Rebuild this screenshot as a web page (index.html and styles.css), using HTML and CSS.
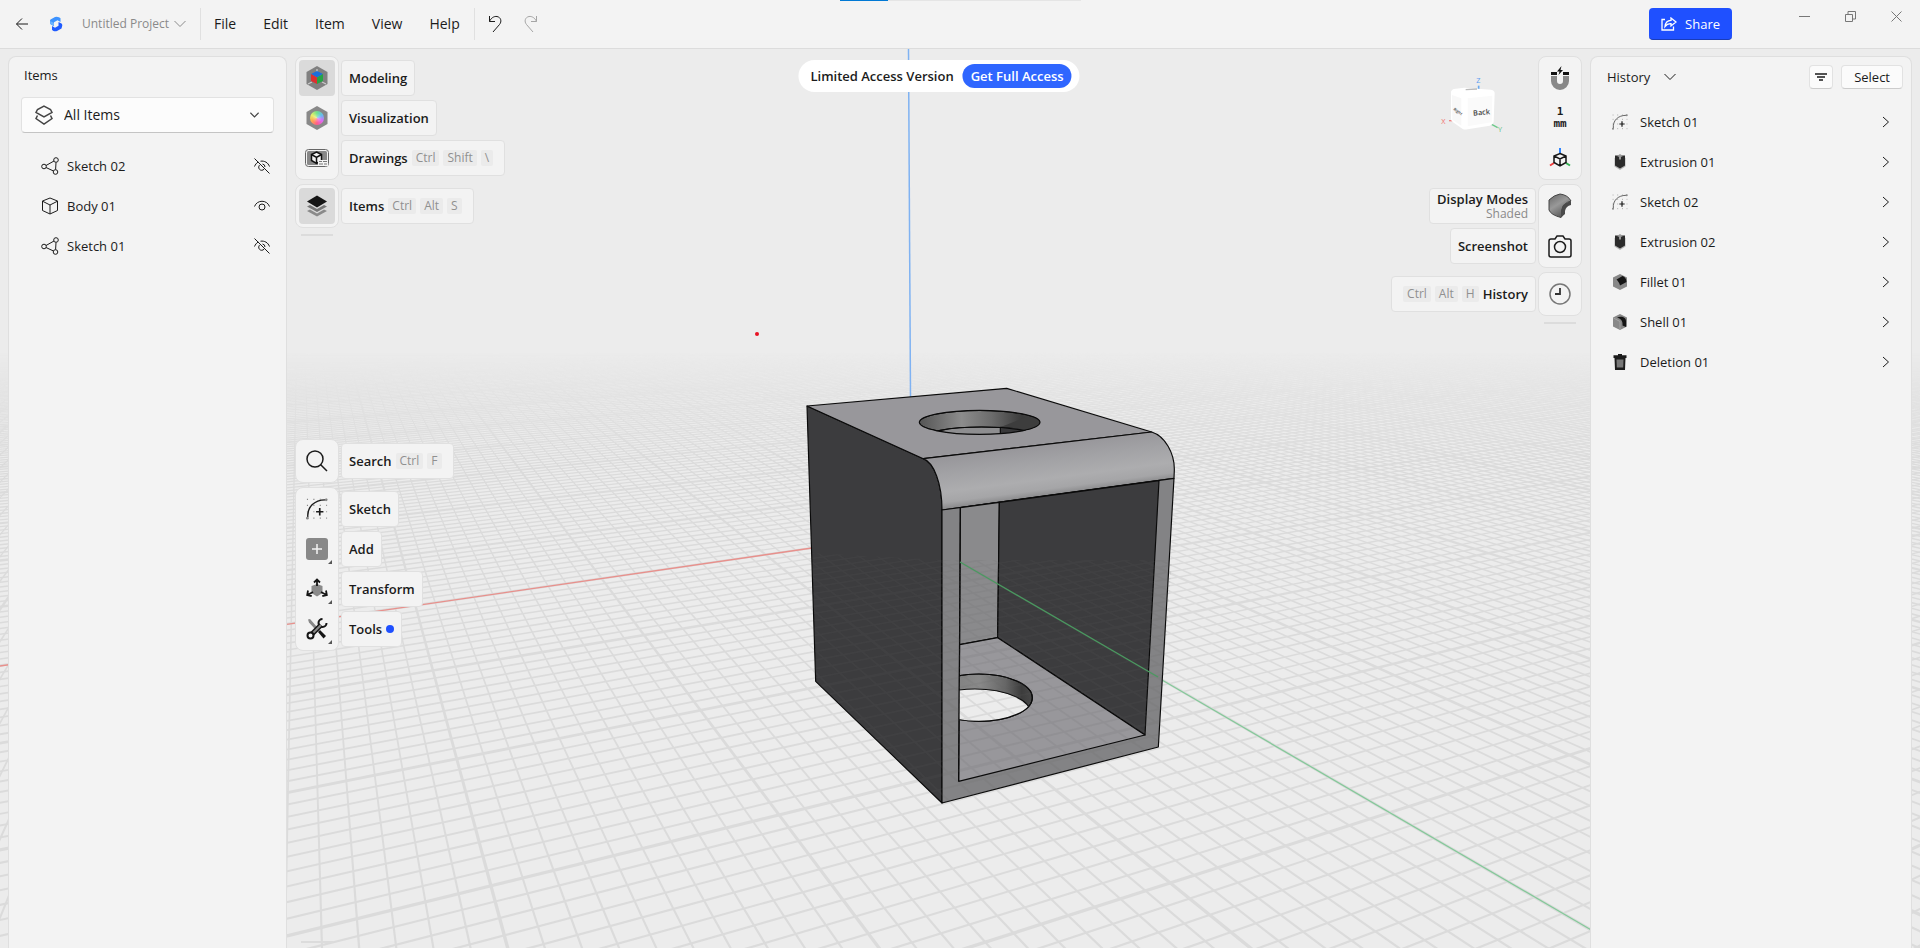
FILE: index.html
```html
<!DOCTYPE html>
<html lang="en">

<head>
    <meta charset="UTF-8">
    <meta name="viewport" content="width=device-width, initial-scale=1.0">
    <title>Untitled Project</title>
    <link rel="stylesheet" href="styles.css">
</head>

<body>
    <!-- Shared icons -->
    <svg class="sprite" aria-hidden="true">
        <symbol id="i-chevron-down" viewBox="0 0 12 8"><path d="M.5 1l5.500 5.500L11.500 1" /></symbol>
        <symbol id="i-chevron-right" viewBox="0 0 8 12"><path d="M1 1l5.500 5L1 11" /></symbol>
        <symbol id="i-nodes" viewBox="0 0 18 18">
            <circle cx="3" cy="9.500" r="2.300" /><circle cx="15" cy="3" r="2.300" /><circle cx="14.500" cy="15" r="2.300" />
            <path d="M5 8.500l8-4.500M5 10.500l7.500 3.500M15 5.500l-.4 7" />
        </symbol>
        <symbol id="i-box" viewBox="0 0 18 18"><path d="M9 1l7.500 3v9.500L9 17l-7.500-3.500V4zM1.500 4.200L9 8l7.500-3.800M9 8v9" /></symbol>
        <symbol id="i-eye" viewBox="0 0 18 18"><path d="M1.500 9.500C4 2.500 14 2.500 16.500 9.500" /><circle cx="9" cy="10" r="3" /></symbol>
        <symbol id="i-eye-off" viewBox="0 0 18 18"><path d="M1.500 9.500C2.300 7.500 3.500 6 5.200 5M7.500 4.200c4-.6 7.500 1.300 9 5.300M7 7.800a3 3 0 1 0 4 4.400M9.500 7a3 3 0 0 1 2.500 3M1.500 1.500l15 15" /></symbol>
        <symbol id="i-sketch" viewBox="0 0 24 24">
            <path d="M2 21C1 10 9 2 21 2" />
            <path d="M1 1.500h22M1 8h22M1 15h22M1 22h22" stroke-dasharray="1.200 5.800" stroke="#888" stroke-width="1.200" />
            <path d="M15 11v8M11 15h8" stroke-width="1.800" />
            <circle cx="1.500" cy="22" r="1.500" fill="#888" stroke="none" /><circle cx="22" cy="2" r="1.500" fill="#888" stroke="none" />
        </symbol>
        <symbol id="i-extrude" viewBox="0 0 16 16">
            <path d="M2.500 4L8 1l5.500 3v8.500L8 16l-5.500-3.500z" fill="#b4b4b4" stroke="none" />
            <path d="M3 1.500h10v10L8 14.500l-5-3z" fill="#2b2b2b" stroke="none" />
            <path d="M5 2l3-2 3 2-2 1v2.500H7V3z" fill="#999" stroke="none" />
        </symbol>
        <symbol id="i-fillet" viewBox="0 0 16 16">
            <path d="M8 0l7 3.500v9L8 16l-7-3.500v-9z" fill="#888" stroke="none" />
            <path d="M4.500 5.500L10.500 2c2 .5 4 3 4 6L8 11.500C7.500 9 6 7 4.500 5.500z" fill="#151515" stroke="none" />
        </symbol>
        <symbol id="i-shell" viewBox="0 0 16 16">
            <path d="M8 0l7 3.500v9L8 16l-7-3.500v-9z" fill="#888" stroke="none" />
            <path d="M5 3.500c5-2 9 0 9 3.500V13l-3.500-1.500c.5-5-2-7-5.500-8z" fill="#151515" stroke="none" />
            <path d="M1.500 4L8 7.500V15" stroke="#aaa" stroke-width=".8" />
        </symbol>
        <symbol id="i-trash" viewBox="0 0 16 16">
            <path d="M6 0h4v1.200h4.500V4h-13V1.200H6zM2.500 4h11L13 16H3z" fill="#1b1b1b" stroke="none" />
            <path d="M4.500 5.500h7l-.3 8H4.800z" fill="#777" stroke="none" />
        </symbol>
    </svg>

    <header class="topbar">
        <div class="loading"></div>
        <button class="plain back" aria-label="Back">
            <svg class="icon" width="14" height="14" viewBox="0 0 14 14"><path d="M13 7H1.500M7 1.500L1.500 7 7 12.500" /></svg>
        </button>
        <svg class="logo" width="14" height="16" viewBox="0 0 14 16" aria-hidden="true">
            <path d="M1.500 3.500L6 1q2-.8 4 .3l1.500 1V6L8.500 4.200 5 6.200v4L2 8.500Q1 8 1 6.500V4.500z" fill="#3d93ff" />
            <path d="M12.500 12.500L8 15q-2 .8-4-.3l-1-1V10l3 1.800 3.500-2V6l3 1.500q.8.500.8 2z" fill="#1f5bff" />
            <path d="M1.200 5l3.800 2v3L2 8.500Q1.200 8 1.200 6.500z" fill="#6db4ff" />
        </svg>
        <button class="plain project">Untitled Project
            <svg class="icon" width="12" height="8"><use href="#i-chevron-down" /></svg>
        </button>
        <nav class="menu">
            <button class="plain">File</button>
            <button class="plain">Edit</button>
            <button class="plain">Item</button>
            <button class="plain">View</button>
            <button class="plain">Help</button>
        </nav>
        <div class="undo-redo">
            <button class="plain" aria-label="Undo"><svg class="icon" width="14" height="18" viewBox="0 0 14 18"><path d="M1.500 1v5.500H7M1.500 6.500C3 3 6 1 9 1.500c4 .8 5 5 2.500 8L5 17" /></svg></button>
            <button class="plain redo" aria-label="Redo"><svg class="icon" width="14" height="18" viewBox="0 0 14 18"><path d="M12.500 1v5.500H7M12.500 6.500C11 3 8 1 5 1.500c-4 .8-5 5-2.500 8L9 17" /></svg></button>
        </div>
        <button class="share">
            <svg class="icon" width="16" height="14" viewBox="0 0 16 14"><path d="M4 2.500H1V13h11.500V9.500M10 1l5 4-5 4V6.700C7.500 6.500 5.500 7.500 4 9.500 4.300 6 6.500 3.500 10 3.300z" /></svg>
            Share
        </button>
        <div class="window-buttons">
            <button class="plain" aria-label="Minimize"><svg class="icon" width="11" height="11" viewBox="0 0 11 11"><path d="M0 5.500h11" /></svg></button>
            <button class="plain" aria-label="Restore"><svg class="icon" width="11" height="11" viewBox="0 0 11 11"><path d="M.5 3.500h7v7h-7zM3 3.500v-3h7.500v7.500H7.500" /></svg></button>
            <button class="plain" aria-label="Close"><svg class="icon" width="11" height="11" viewBox="0 0 11 11"><path d="M.5.5l10 10M10.500.5l-10 10" /></svg></button>
        </div>
    </header>

    <main class="workspace">
        <svg class="scene" viewBox="0 49 1920 899" preserveAspectRatio="xMidYMid slice" aria-label="3D model">
            <defs>
                <linearGradient id="fog" x1="0" y1="352" x2="0" y2="460" gradientUnits="userSpaceOnUse">
                    <stop offset="0" stop-color="#000" /><stop offset=".4" stop-color="#888" /><stop offset="1" stop-color="#fff" />
                </linearGradient>
                <mask id="fogMask" maskUnits="userSpaceOnUse" x="0" y="340" width="1920" height="608">
                    <rect x="0" y="340" width="1920" height="608" fill="url(#fog)" />
                </mask>
                <linearGradient id="filletShade" x1="800" y1="225" x2="820" y2="378" gradientUnits="userSpaceOnUse">
                    <stop offset="0" stop-color="#98979b" /><stop offset=".3" stop-color="#a2a2a5" /><stop offset=".65" stop-color="#adadaf" /><stop offset=".85" stop-color="#a5a5a7" /><stop offset="1" stop-color="#858587" />
                </linearGradient>
                <linearGradient id="topHole">
                    <stop offset="0" stop-color="#555" /><stop offset=".35" stop-color="#8c8c8c" /><stop offset=".6" stop-color="#6c6c6c" /><stop offset=".85" stop-color="#3b3b3b" /><stop offset="1" stop-color="#444" />
                </linearGradient>
                <linearGradient id="bottomHole">
                    <stop offset="0" stop-color="#777" /><stop offset=".5" stop-color="#8a8a8a" /><stop offset=".75" stop-color="#666" /><stop offset=".9" stop-color="#3c3c3c" /><stop offset="1" stop-color="#484848" />
                </linearGradient>
                <clipPath id="topHoleClip"><ellipse cx="599" cy="157" rx="181" ry="36" /></clipPath>
                <clipPath id="bottomHoleClip"><ellipse cx="597" cy="983" rx="160" ry="71" /></clipPath>
                <clipPath id="floorClip"><path d="M541 413L1137 332 1095 1095 536 1234z" /></clipPath>
                <clipPath id="lowerClip"><path d="M812 553L942 560 1172 560 1158 747 942 803 816 681z" /></clipPath>
            </defs>

            <g mask="url(#fogMask)">
                <g id="grid" fill="currentColor">
                    <path id="gridX" /><path id="gridY" /><path id="majorX" /><path id="majorY" />
                </g>
            </g>
            <path class="axis axis-x" d="M0 666L812 548" />
            <path class="axis axis-z" d="M908.500 49L910.500 398" />
            <path class="axis axis-y" d="M1150 673L1605 938" />

            <g class="model" transform="translate(780 370) scale(.33333)">
                <path d="M81 108L430 266C462 278 486 340 486 420V1299L107 934z" fill="#3c3c3e" />
                <path d="M81 108L680 55 1115 186 430 266z" fill="#98979b" />
                <path d="M430 266L1115 186C1155 198 1184 250 1183 300L1182 325 486 420C486 340 462 278 430 266z" fill="url(#filletShade)" />
                <path d="M486 420L1182 325 1135 1131 486 1299z" fill="#838385" />
                <path d="M541 413L658 397 653 803 539 824z" fill="#8a8a8c" />
                <path d="M658 397L1137 332 1095 1095 653 803z" fill="#3c3c3e" />
                <path d="M539 824L653 803 1095 1095 536 1234z" fill="#98979b" />
                <g clip-path="url(#topHoleClip)">
                    <ellipse cx="599" cy="157" rx="181" ry="36" fill="url(#topHole)" />
                    <ellipse cx="605" cy="205" rx="175" ry="34" fill="#8e8e90" />
                    <path d="M661 172h110v30H661z" fill="#38383a" />
                    <path d="M740 140h40v42l-38-2q-40-8-81-8z" fill="#3d3d3d" stroke="none" />
                    <ellipse cx="605" cy="205" rx="175" ry="34" fill="none" />
                </g>
                <ellipse cx="599" cy="157" rx="181" ry="36" fill="none" />
                <g clip-path="url(#floorClip)">
                    <ellipse cx="597" cy="983" rx="160" ry="71" fill="url(#bottomHole)" />
                    <g clip-path="url(#bottomHoleClip)"><ellipse cx="585" cy="1032" rx="168" ry="75" fill="#ececec" /></g>
                    <ellipse cx="597" cy="983" rx="160" ry="71" fill="none" />
                </g>
                <path d="M541 413L536 1234" fill="none" />
            </g>
            <use class="grid-through" href="#grid" clip-path="url(#lowerClip)" />
            <path class="axis axis-y over" d="M960 562L1158 677" />
            <circle cx="757" cy="334" r="2" fill="#e81123" />
        </svg>

        <aside class="panel items-panel">
            <h2>Items</h2>
            <div class="filter">
                <svg class="icon" width="18" height="20" viewBox="0 0 18 20"><path d="M9 1.200l6.500 3.300 1.500 3-8 4.500-8-4.500 1.500-3zM2.500 10.500L1 13.500 9 19l8-5.500-1.500-3" /></svg>
                <select aria-label="Filter items">
                    <option>All Items</option>
                </select>
                <svg class="icon arrow" width="9" height="6" viewBox="0 0 12 8"><use href="#i-chevron-down" /></svg>
            </div>
            <ul class="rows">
                <li><svg class="icon" width="18" height="18"><use href="#i-nodes" /></svg><span>Sketch 02</span><button class="plain" aria-label="Show Sketch 02"><svg class="icon" width="18" height="18"><use href="#i-eye-off" /></svg></button></li>
                <li><svg class="icon" width="18" height="18"><use href="#i-box" /></svg><span>Body 01</span><button class="plain" aria-label="Hide Body 01"><svg class="icon" width="18" height="18"><use href="#i-eye" /></svg></button></li>
                <li><svg class="icon" width="18" height="18"><use href="#i-nodes" /></svg><span>Sketch 01</span><button class="plain" aria-label="Show Sketch 01"><svg class="icon" width="18" height="18"><use href="#i-eye-off" /></svg></button></li>
            </ul>
        </aside>

        <div class="toolbars">
            <div class="group">
                <div class="tools">
                    <button class="tool active" aria-label="Modeling">
                        <svg width="24" height="26" viewBox="0 0 24 26"><path d="M12 1l10.500 6v12L12 25 1.500 19V7z" fill="#808080" /><path d="M12 4v6M3 19l4-2M21 19l-4-2" stroke="#ccc" stroke-width="1.200" /><path d="M12 6l6 3-6 3.500L6 9z" fill="#1a6fdc" /><path d="M6 9l6 3.500V19l-6-3z" fill="#dc3030" /><path d="M18 9l-6 3.500V19l6-3z" fill="#26a444" /></svg>
                    </button>
                    <button class="tool" aria-label="Visualization">
                        <svg width="24" height="26" viewBox="0 0 24 26"><path d="M12 1l10.500 6v12L12 25 1.500 19V7z" fill="#888" /><foreignObject x="5" y="6" width="14" height="14"><div class="wheel"></div></foreignObject></svg>
                    </button>
                    <button class="tool" aria-label="Drawings">
                        <svg width="24" height="18" viewBox="0 0 24 18"><rect x=".5" y=".5" width="23" height="17" rx="3" fill="#f3f3f3" stroke="#666" /><rect x="2" y="2" width="20" height="14" rx="1.500" fill="#888" /><path d="M11.500 3l5 2.500v6l-5 3-5-3v-6z" fill="#f3f3f3" stroke="#111" stroke-width="1.500" /><path d="M6.500 5.500l5 3 5-3M11.500 8.500v6" fill="none" stroke="#111" stroke-width="1.500" /><path d="M13 11h10v6H13z" fill="#f3f3f3" /><path d="M14 12.500h3m1 0h4M14 15h4m1 0h3" stroke="#777" stroke-width="1.200" /></svg>
                    </button>
                </div>
                <div class="labels">
                    <span class="label">Modeling</span>
                    <span class="label">Visualization</span>
                    <span class="label">Drawings <kbd>Ctrl</kbd><kbd>Shift</kbd><kbd>\</kbd></span>
                </div>
            </div>
            <div class="group">
                <div class="tools">
                    <button class="tool active" aria-label="Items">
                        <svg width="20" height="22" viewBox="0 0 20 22"><path d="M0 16l3-1.500 7 4 7-4 3 1.500-10 5.500z" fill="#8a8a8a" /><path d="M0 11.500L3 10l7 4 7-4 3 1.500L10 17z" fill="#777" /><path d="M10 .5l10 6-10 6-10-6z" fill="#151515" /></svg>
                    </button>
                </div>
                <div class="labels">
                    <span class="label">Items <kbd>Ctrl</kbd><kbd>Alt</kbd><kbd>S</kbd></span>
                </div>
            </div>
            <div class="handle"></div>

            <div class="group model-tools">
                <div class="tools">
                    <button class="tool" aria-label="Search">
                        <svg class="icon bold" width="22" height="22" viewBox="0 0 22 22"><circle cx="9" cy="9" r="8" /><path d="M14.500 14.500L21 21" /></svg>
                    </button>
                </div>
                <div class="labels">
                    <span class="label">Search <kbd>Ctrl</kbd><kbd>F</kbd></span>
                </div>
            </div>
            <div class="group">
                <div class="tools">
                    <button class="tool" aria-label="Sketch"><svg class="icon bold" width="22" height="22"><use href="#i-sketch" /></svg></button>
                    <button class="tool more" aria-label="Add">
                        <svg width="22" height="22" viewBox="0 0 22 22"><rect width="22" height="22" rx="3" fill="#888" /><path d="M11 6v10M6 11h10" stroke="#f3f3f3" stroke-width="1.500" /></svg>
                    </button>
                    <button class="tool more" aria-label="Transform">
                        <svg width="22" height="22" viewBox="0 0 22 22"><path d="M11 6l5.500 2v7L11 18.500 5.500 15V8z" fill="#8a8a8a" /><path d="M11 8V2M8 4.500l3-3 3 3M7 14l-5.500 3M2 12.500L1.200 17l4.500 1M15 14l5.500 3M20 12.500l.8 4.500-4.500 1" fill="none" stroke="#151515" stroke-width="1.800" /></svg>
                    </button>
                    <button class="tool more" aria-label="Tools">
                        <svg width="22" height="22" viewBox="0 0 22 22"><path d="M2 1.500l2-.5 7 8-2 2-6-6.500z" fill="#888" /><path d="M12 14l2-2 6 6-2.500 2.500z" fill="#151515" /><path d="M6 16L15 7" stroke="#151515" stroke-width="5" /><path d="M20.500 5a4 4 0 1 1-4-4" fill="none" stroke="#151515" stroke-width="2" /><path d="M6 16L15 7" stroke="#888" stroke-width="2" /><circle cx="4.500" cy="17.500" r="3" fill="#f3f3f3" stroke="#151515" stroke-width="2" /></svg>
                    </button>
                </div>
                <div class="labels">
                    <span class="label">Sketch</span>
                    <span class="label">Add</span>
                    <span class="label">Transform</span>
                    <span class="label">Tools <i class="dot"></i></span>
                </div>
            </div>
            <div class="handle bottom"></div>
        </div>

        <div class="access">
            <span>Limited Access Version</span>
            <button>Get Full Access</button>
        </div>

        <svg class="view-cube" width="70" height="66" viewBox="0 0 210 198" aria-label="View orientation">
            <path d="M119 32v12" stroke="#69a8ee" stroke-width="5" /><path d="M44 137H30" stroke="#f08080" stroke-width="4" /><path d="M158 148l18 10" stroke="#6cc98a" stroke-width="4" />
            <path d="M44 42L76 38 156 44Q167 46 167 54L164 142Q162 150 152 152L86 163Q76 165 70 161L42 142Q36 138 36 132V50Q38 44 44 42z" fill="#fff" />
            <path d="M39 60L67 70V152L40 134z" fill="#f8f8f8" /><path d="M86 70L160 62 158 142 86 154z" fill="#fafafa" />
            <text x="103" y="122" transform="rotate(-5 103 122)">Back</text>
            <text class="side" x="42" y="104" transform="rotate(35 42 104)">Right</text>
            <path d="M80 44l34-2" stroke="#bbb" stroke-width="4" />
            <text class="z" x="112" y="23">Z</text><text class="x" x="7" y="147">X</text><text class="y" x="177" y="170">Y</text>
        </svg>

        <div class="toolbars right">
            <div class="group">
                <div class="tools">
                    <button class="tool" aria-label="Snapping">
                        <svg width="18" height="24" viewBox="0 0 18 24"><path d="M0 10h6v5a3 3 0 0 0 6 0v-5h6v5a9 9 0 0 1-18 0z" fill="#888" /><path d="M0 6h6v3H0zM12 6h6v3h-6z" fill="#111" /><path d="M10.500 0L6 5.500h2.500L7.500 9 12 4H9.500z" fill="#111" /></svg>
                    </button>
                    <button class="tool units"><span>1</span><span>mm</span></button>
                    <button class="tool" aria-label="Orientation">
                        <svg width="22" height="22" viewBox="0 0 22 22"><path d="M11 1v5" stroke="#2f85ff" stroke-width="2" /><path d="M5 16l-4 2.500" stroke="#f03c3c" stroke-width="2" /><path d="M17 16l4 2.500" stroke="#30b050" stroke-width="2" /><path d="M11 6.500l6 2.500v6.500L11 19l-6-3.500V9zM5 9l6 3 6-3M11 12v7" fill="none" stroke="#151515" stroke-width="1.500" /></svg>
                    </button>
                </div>
            </div>
            <div class="group">
                <div class="tools">
                    <button class="tool" aria-label="Display Modes">
                        <svg width="24" height="26" viewBox="0 0 24 26"><defs><linearGradient id="shade" x2=".6" y2="1"><stop offset="0" stop-color="#666" /><stop offset=".5" stop-color="#999" /><stop offset="1" stop-color="#555" /></linearGradient></defs><path d="M1 7q5-5 11-6 8 1 11 7-8 2-9 9v6l-1 1.500Q3 22 1 17z" fill="url(#shade)" stroke="#444" /><path d="M23 8v4q-5 1-6 6v3l-4 3.500V18q1-8 10-10z" fill="#4a4a4a" /></svg>
                    </button>
                    <button class="tool" aria-label="Screenshot">
                        <svg class="icon bold" width="24" height="23" viewBox="0 0 24 23"><path d="M3 4h4l2-3h6l2 3h4q2 0 2 2v14q0 2-2 2H3q-2 0-2-2V6q0-2 2-2z" /><circle cx="12" cy="12" r="5.500" /></svg>
                    </button>
                </div>
                <div class="labels">
                    <span class="label stacked">Display Modes <small>Shaded</small></span>
                    <span class="label">Screenshot</span>
                </div>
            </div>
            <div class="group">
                <div class="tools">
                    <button class="tool" aria-label="History">
                        <svg width="22" height="22" viewBox="0 0 22 22" fill="none"><circle cx="11" cy="11" r="10" stroke="#777" stroke-width="1.500" /><path d="M11 5v6H6" stroke="#333" stroke-width="1.800" /></svg>
                    </button>
                </div>
                <div class="labels">
                    <span class="label"><kbd>Ctrl</kbd><kbd>Alt</kbd><kbd>H</kbd> History</span>
                </div>
            </div>
            <div class="handle"></div>
        </div>

        <aside class="panel history-panel">
            <div class="history-head">
                <button class="plain title">History <svg class="icon" width="12" height="8"><use href="#i-chevron-down" /></svg></button>
                <button class="small-button square" aria-label="Filter history"><svg class="icon bold" width="12" height="8" viewBox="0 0 12 8"><path d="M0 1h12M2 4h8M4 7h4" /></svg></button>
                <button class="small-button">Select</button>
            </div>
            <ul class="rows">
                <li><svg class="icon" width="16" height="16"><use href="#i-sketch" /></svg><span>Sketch 01</span><svg class="icon" width="8" height="12"><use href="#i-chevron-right" /></svg></li>
                <li><svg class="icon" width="16" height="16"><use href="#i-extrude" /></svg><span>Extrusion 01</span><svg class="icon" width="8" height="12"><use href="#i-chevron-right" /></svg></li>
                <li><svg class="icon" width="16" height="16"><use href="#i-sketch" /></svg><span>Sketch 02</span><svg class="icon" width="8" height="12"><use href="#i-chevron-right" /></svg></li>
                <li><svg class="icon" width="16" height="16"><use href="#i-extrude" /></svg><span>Extrusion 02</span><svg class="icon" width="8" height="12"><use href="#i-chevron-right" /></svg></li>
                <li><svg class="icon" width="16" height="16"><use href="#i-fillet" /></svg><span>Fillet 01</span><svg class="icon" width="8" height="12"><use href="#i-chevron-right" /></svg></li>
                <li><svg class="icon" width="16" height="16"><use href="#i-shell" /></svg><span>Shell 01</span><svg class="icon" width="8" height="12"><use href="#i-chevron-right" /></svg></li>
                <li><svg class="icon" width="16" height="16"><use href="#i-trash" /></svg><span>Deletion 01</span><svg class="icon" width="8" height="12"><use href="#i-chevron-right" /></svg></li>
            </ul>
        </aside>
    </main>

    <script src="grid.js"></script>
</body>

</html>
```

FILE: styles.css
```css
* {
    box-sizing: border-box;
}

body {
    margin: 0;
    height: 100vh;
    display: flex;
    flex-direction: column;
    overflow: hidden;
    font-family: "Open Sans", "Noto Sans", sans-serif;
    font-size: 13px;
    line-height: 18px;
    color: #1b1b1b;
    background-color: #ececec;
}

button,
select {
    font: inherit;
    color: inherit;
}

.sprite {
    position: absolute;
    width: 0;
    height: 0;
}

.icon {
    fill: none;
    stroke: currentColor;
    stroke-width: 1;
    flex-shrink: 0;
}

.icon.bold {
    stroke-width: 1.5;
}

.plain {
    display: flex;
    align-items: center;
    padding: 0;
    border: none;
    background: none;
}

/* Top bar */
.topbar {
    position: relative;
    display: flex;
    align-items: center;
    height: 49px;
    padding: 0 18px 0 15px;
    background-color: #f3f3f3;
    border-bottom: 1px solid #dcdcdc;
    flex-shrink: 0;
}

.loading {
    position: absolute;
    top: 0;
    left: 50%;
    width: 241px;
    height: 1px;
    margin-left: -120px;
    background: linear-gradient(to right, #0078d4 48px, #e5e5e5 48px);
}

.logo {
    margin: 0 19px 0 20px;
}

.project {
    gap: 5px;
    height: 32px;
    padding-right: 14px;
    color: #8a8a8a;
    font-size: 12px;
    border-right: 1px solid #e0e0e0;
}

.menu {
    display: flex;
    gap: 27px;
    height: 32px;
    padding: 0 14px 0 13px;
    font-size: 14px;
    border-right: 1px solid #e0e0e0;
}

.undo-redo {
    display: flex;
    gap: 22px;
    margin-left: 13px;
}

.redo {
    color: #a5a5a5;
}

.share {
    display: flex;
    align-items: center;
    gap: 8px;
    height: 32px;
    margin-left: auto;
    padding: 0 12px;
    color: #ffffff;
    background-color: #1f50ff;
    border: none;
    border-bottom: 1px solid #1a3cb8;
    border-radius: 4px;
}

.share .icon {
    stroke-width: 1.3;
}

.window-buttons {
    display: flex;
    align-self: flex-start;
    gap: 35px;
    margin-left: 67px;
    padding-top: 11px;
    color: #777777;
}

/* Workspace */
.workspace {
    position: relative;
    flex: 1;
    display: flex;
    gap: 8px;
    padding: 7px 8px 0;
    min-height: 0;
}

.scene {
    position: absolute;
    inset: 0;
    width: 100%;
    height: 100%;
    color: #dbdbdb;
}

.axis {
    fill: none;
    stroke-width: 1.3;
}

.axis-x {
    stroke: #e8908c;
}

.axis-y {
    stroke: #85c99a;
}

.axis-y.over {
    stroke: #4a9a60;
}

.axis-z {
    stroke: #7fb2f2;
    stroke-width: 1.5;
}

.model {
    stroke: #0a0a0a;
    stroke-width: 3.5;
    stroke-linejoin: round;
}

.grid-through {
    color: #666666;
    opacity: 0.12;
}

.panel {
    position: relative;
    background-color: #f3f3f3;
    border: 1px solid #dfdfdf;
    border-bottom: none;
    border-radius: 8px 8px 0 0;
}

.items-panel {
    width: 279px;
    padding: 8px 12px;
}

.items-panel h2 {
    margin: 0 0 12px 3px;
    font-size: 13px;
    line-height: 20px;
    font-weight: 400;
}

.filter {
    display: grid;
    grid-template-columns: 46px 1fr 30px;
    align-items: center;
    height: 36px;
    color: #444444;
}

.filter select {
    grid-area: 1 / 1 / 2 / 4;
    height: 36px;
    padding: 0 42px;
    font-size: 14px;
    color: #1b1b1b;
    appearance: none;
    background-color: #fcfcfc;
    border: 1px solid #e2e2e2;
    border-bottom-color: #c4c4c4;
    border-radius: 4px;
}

.filter .icon {
    grid-area: 1 / 1;
    margin-left: 14px;
    stroke-width: 1.5;
    z-index: 1;
    pointer-events: none;
}

.filter .arrow {
    grid-area: 1 / 3;
    margin-left: 6px;
}

.rows {
    list-style: none;
    margin: 0;
    padding: 0;
}

.rows li {
    display: flex;
    align-items: center;
    height: 40px;
}

.rows span {
    flex: 1;
}

.items-panel .rows {
    margin-top: 13px;
    padding: 0 3px 0 20px;
}

.items-panel .rows span {
    margin-left: 8px;
}

/* Toolbars */
.toolbars {
    position: relative;
    display: flex;
    flex-direction: column;
    gap: 4px;
}

.group {
    display: flex;
    gap: 2px;
}

.tools {
    display: flex;
    flex-direction: column;
    gap: 4px;
    padding: 3px;
    background-color: #f3f3f3;
    border: 1px solid #e0e0e0;
    border-radius: 8px;
}

.tool {
    position: relative;
    display: flex;
    flex-direction: column;
    align-items: center;
    justify-content: center;
    width: 36px;
    height: 36px;
    padding: 0;
    background: none;
    border: none;
    border-radius: 4px;
}

.tool.active {
    background-color: #dadada;
}

.tool.more::after {
    content: "";
    position: absolute;
    right: 3px;
    bottom: 3px;
    border: 2px solid #555555;
    border-top-color: transparent;
    border-left-color: transparent;
}

.wheel {
    width: 14px;
    height: 14px;
    border-radius: 50%;
    background: radial-gradient(circle, #ffffff66, transparent 50%), conic-gradient(#6ee08a, #66bdf0, #e06af5, #ff5c8a, #ffa64d, #e6f06a, #6ee08a);
}

.units {
    font-family: "DejaVu Sans Mono", monospace;
    font-size: 11px;
    font-weight: 700;
    line-height: 12px;
}

.labels {
    display: flex;
    flex-direction: column;
    align-items: flex-start;
    gap: 4px;
    padding-top: 4px;
}

.label {
    display: flex;
    align-items: center;
    gap: 4px;
    height: 36px;
    padding: 0 7px;
    font-weight: 600;
    background-color: #f3f3f3;
    border: 1px solid #e0e0e0;
    border-radius: 4px;
}

.label:has(kbd) {
    padding-right: 11px;
}

kbd {
    padding: 0 4px;
    font-family: inherit;
    font-size: 12px;
    font-weight: 400;
    line-height: 16px;
    color: #909090;
    background-color: #ebebeb;
    border-radius: 2px;
}

.dot {
    width: 8px;
    height: 8px;
    border-radius: 50%;
    background-color: #1f50ff;
}

.handle {
    width: 32px;
    height: 2px;
    margin: 2px 6px 0;
    background-color: #dcdcdc;
}

.model-tools {
    margin-top: 199px;
}

.handle.bottom {
    margin-top: auto;
    margin-bottom: 5px;
}

.toolbars.right {
    margin-left: auto;
}

.right .group {
    flex-direction: row-reverse;
}

.right .labels {
    align-items: flex-end;
}

.right .label:has(kbd) {
    padding: 0 7px 0 11px;
}

.right .handle {
    align-self: flex-end;
}

.label.stacked {
    flex-direction: column;
    align-items: flex-end;
    justify-content: center;
    gap: 0;
    line-height: 16px;
}

.stacked small {
    font-size: 12px;
    font-weight: 400;
    line-height: 14px;
    color: #8a8a8a;
}

/* Floating parts of the viewport */
.access {
    position: absolute;
    top: 11px;
    left: 50%;
    display: flex;
    align-items: center;
    gap: 9px;
    height: 32px;
    padding: 0 8px 0 12px;
    transform: translateX(-50%);
    margin-left: -21px;
    font-weight: 600;
    white-space: nowrap;
    background-color: #ffffff;
    border-radius: 16px;
}

.access button {
    height: 24px;
    padding: 0 8px;
    color: #ffffff;
    background-color: #2f66ff;
    border: none;
    border-radius: 12px;
}

.view-cube {
    position: absolute;
    top: 26px;
    right: 411px;
}

.view-cube text {
    font-size: 22px;
    font-weight: 600;
    fill: #444444;
}

.view-cube .side {
    font-size: 12px;
}

.view-cube .z {
    font-weight: 400;
    fill: #5c9df0;
}

.view-cube .x {
    font-weight: 400;
    fill: #f07070;
}

.view-cube .y {
    font-weight: 400;
    fill: #5cc080;
}

/* History */
.history-panel {
    width: 322px;
    padding: 8px;
}

.history-head {
    display: flex;
    align-items: center;
    gap: 8px;
    height: 24px;
}

.history-head .title {
    gap: 14px;
    margin-right: auto;
    padding-left: 8px;
}

.small-button {
    height: 24px;
    padding: 0 12px;
    background-color: #fbfbfb;
    border: 1px solid #e2e2e2;
    border-bottom-color: #cccccc;
    border-radius: 4px;
}

.small-button.square {
    display: flex;
    align-items: center;
    justify-content: center;
    width: 24px;
    padding: 0;
}

.history-panel .rows {
    margin-top: 13px;
    padding: 0 13px;
}

.history-panel .rows span {
    margin-left: 12px;
}
```

FILE: grid.js
```js
// Ground grid: both line families run to a vanishing point on the horizon
const HORIZON = 177;
const TOP = 345;
const BOTTOM = 948;

// x position of line k at height y
const alongX = (k, y) => 3374 - (y - HORIZON) * (6.906 - 0.0946 * k);
const alongY = (k, y) => 300 + (y - HORIZON) * (1.7145 - 0.04817 * k);

function bar(line, k, near, far) {
    const top = line(k, TOP);
    const bottom = line(k, BOTTOM);
    // widen flat lines so that their stroke keeps the same thickness
    const stretch = Math.hypot(bottom - top, BOTTOM - TOP) / (BOTTOM - TOP) / 2;
    const a = far * stretch;
    const b = near * stretch;
    return `M${(top - a).toFixed(1)} ${TOP}H${(top + a).toFixed(1)}L${(bottom + b).toFixed(1)} ${BOTTOM}H${(bottom - b).toFixed(1)}z`;
}

function family(line, from, to, minorId, majorId) {
    let minor = "";
    let major = "";
    for (let k = from; k <= to; k++) {
        if (k % 10 === 0) {
            major += bar(line, k, 3.4, 1.6);
        } else {
            minor += bar(line, k, 2.2, 1);
        }
    }
    document.getElementById(minorId).setAttribute("d", minor);
    document.getElementById(majorId).setAttribute("d", major);
}

family(alongX, -140, 60, "gridX", "majorX");
family(alongY, -165, 80, "gridY", "majorY");
```
